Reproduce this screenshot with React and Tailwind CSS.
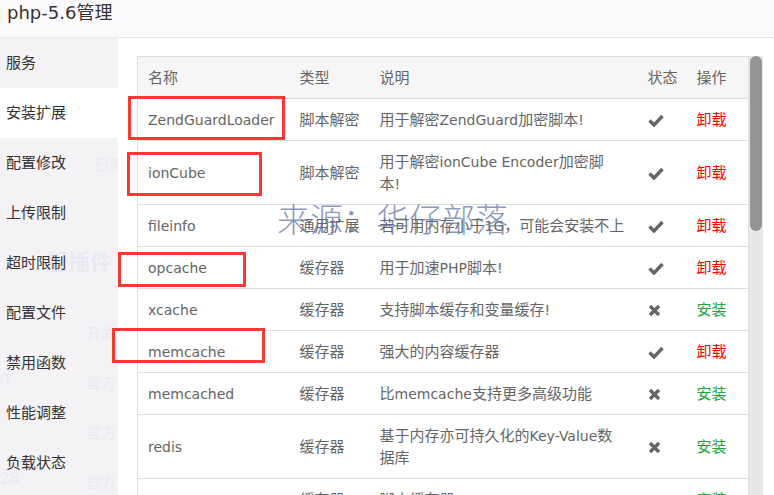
import React from "react";

const rows = [
  { name: "ZendGuardLoader", type: "脚本解密", desc: ["用于解密ZendGuard加密脚本!"], ok: true },
  { name: "ionCube", type: "脚本解密", desc: ["用于解密ionCube Encoder加密脚", "本!"], ok: true },
  { name: "fileinfo", type: "通用扩展", desc: ["若可用内存小于1G，可能会安装不上"], ok: true },
  { name: "opcache", type: "缓存器", desc: ["用于加速PHP脚本!"], ok: true },
  { name: "xcache", type: "缓存器", desc: ["支持脚本缓存和变量缓存!"], ok: false },
  { name: "memcache", type: "缓存器", desc: ["强大的内容缓存器"], ok: true },
  { name: "memcached", type: "缓存器", desc: ["比memcache支持更多高级功能"], ok: false },
  { name: "redis", type: "缓存器", desc: ["基于内存亦可持久化的Key-Value数", "据库"], ok: false },
  { name: "apc", type: "缓存器", desc: ["脚本缓存器"], ok: false },
];

const menu = ["服务", "安装扩展", "配置修改", "上传限制", "超时限制", "配置文件", "禁用函数", "性能调整", "负载状态"];

// CJK runs are a touch wider than the latin text in the original
const Mixed = ({ text }) =>
  text.split(/([\u3000-\u9fff\uff00-\uffef]+)/).map((part, i) =>
    /[\u3000-\u9fff\uff00-\uffef]/.test(part) ? (
      <span key={i} className="text-[15px] leading-none">{part}</span>
    ) : (
      <span key={i}>{part}</span>
    )
  );

const Check = () => (
  <svg width="16" height="13" viewBox="0 0 16 13" className="block">
    <path d="M1.5 6.5 L6 11 L14.5 2" fill="none" stroke="#666" strokeWidth="3.4" />
  </svg>
);

const Cross = () => (
  <svg width="13" height="13" viewBox="0 0 13 13" className="block">
    <path d="M2 2 L11 11 M11 2 L2 11" fill="none" stroke="#666" strokeWidth="3.4" />
  </svg>
);

const cell = "pl-[10px] pt-[10px] pb-[9px] align-middle";

export default function App() {
  return (
    <div className="relative w-[774px] h-[495px] overflow-hidden bg-white text-[#666] font-['DejaVu_Sans','Noto_Sans_CJK_SC',sans-serif]">
      <div className="h-[38px] bg-[#fdfafd] border-b border-[#ebe8eb] pl-[7px] text-[18px] leading-[26px] text-[#333]">
        php-5.6管理
      </div>

      <div className="flex h-[457px]">
        <aside className="relative w-[118px] shrink-0 bg-[#f5f2f5] overflow-hidden">
          {/* faint text of the page behind the dialog */}
          <div className="absolute inset-0 text-[15px] text-[#eae9f3] whitespace-nowrap">
            <span className="absolute left-[95px] top-[116px]">已安</span>
            <span className="absolute left-[46px] top-[208px] text-[22px] font-bold">版插件</span>
            <span className="absolute left-[86px] top-[285px]">开发</span>
            <span className="absolute left-[86px] top-[334px]">官方</span>
            <span className="absolute left-0 top-[331px]">0</span>
            <span className="absolute left-[86px] top-[384px]">官方</span>
            <span className="absolute left-0 top-[430px]">28</span>
            <span className="absolute left-[86px] top-[434px]">官方</span>
          </div>

          <ul className="relative">
            {menu.map((m, i) => (
              <li
                key={m}
                className={`h-[50px] flex items-center pl-[6px] text-[15px] text-[#333] ${i === 1 ? "bg-white" : ""}`}
              >
                {m}
              </li>
            ))}
          </ul>
        </aside>

        <main className="flex flex-1">
          <div className="pl-[19px] pt-[18px]">
            <table className="w-[611px] table-fixed border-collapse border-x border-[#ddd] text-[14px] leading-[22px]">
              <colgroup>
                <col className="w-[152px]" />
                <col className="w-[80px]" />
                <col className="w-[268px]" />
                <col className="w-[49px]" />
                <col className="w-[62px]" />
              </colgroup>
              <thead>
                <tr className="bg-[#f6f6f6] border-y border-[#ddd] text-left">
                  <th className={`${cell} font-normal`}><Mixed text="名称" /></th>
                  <th className={`${cell} font-normal`}><Mixed text="类型" /></th>
                  <th className={`${cell} font-normal`}><Mixed text="说明" /></th>
                  <th className={`${cell} font-normal`}><Mixed text="状态" /></th>
                  <th className={`${cell} font-normal`}><Mixed text="操作" /></th>
                </tr>
              </thead>
              <tbody>
                {rows.map((r) => (
                  <tr key={r.name} className="border-b border-[#ddd]">
                    <td className={`${cell} whitespace-nowrap`}>{r.name}</td>
                    <td className={`${cell} whitespace-nowrap`}><Mixed text={r.type} /></td>
                    <td className={`${cell} whitespace-nowrap`}>
                      {r.desc.map((line) => (
                        <div key={line} className="h-[22px]"><Mixed text={line} /></div>
                      ))}
                    </td>
                    <td className={cell}>{r.ok ? <Check /> : <Cross />}</td>
                    <td className={`${cell} whitespace-nowrap`}>
                      {r.ok ? (
                        <span className="text-[#ff0000]"><Mixed text="卸载" /></span>
                      ) : (
                        <span className="text-[#20a53a]"><Mixed text="安装" /></span>
                      )}
                    </td>
                  </tr>
                ))}
              </tbody>
            </table>
          </div>

          <div className="mt-[18px] w-[14px] bg-[#e8e6e9] px-[1px]">
            <div className="h-[175px] rounded-full bg-[#959595]" />
          </div>
        </main>
      </div>

      {/* annotation boxes drawn over the screenshot */}
      <div className="absolute left-[128px] top-[96px] w-[157px] h-[44px] border-[3px] border-[#ff3636]" />
      <div className="absolute left-[127px] top-[152px] w-[135px] h-[44px] border-[3px] border-[#ff3636]" />
      <div className="absolute left-[118px] top-[252px] w-[128px] h-[35px] border-[3px] border-[#ff3636]" />
      <div className="absolute left-[112px] top-[328px] w-[153px] h-[35px] border-[3px] border-[#ff3636]" />

      {/* watermark */}
      <div className="absolute left-[277px] top-[202px] text-[33px] leading-none font-light text-[#6377a6]/75 whitespace-nowrap font-['Noto_Sans_CJK_SC',sans-serif]">
        来源：华仔部落
      </div>
    </div>
  );
}
